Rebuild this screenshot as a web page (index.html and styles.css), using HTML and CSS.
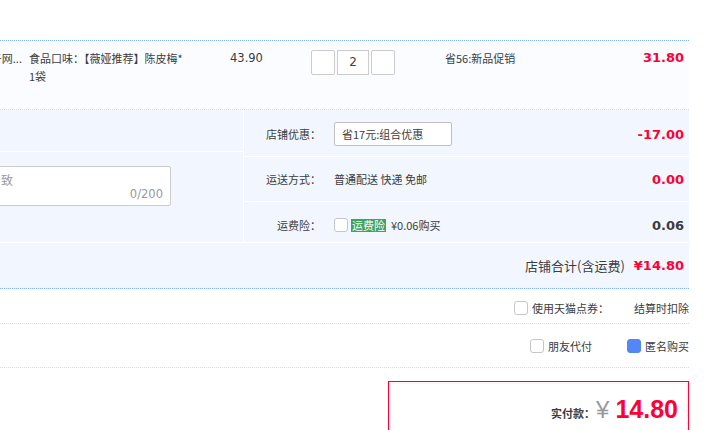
FILE: index.html
```html
<!DOCTYPE html>
<html lang="zh-CN">
<head>
<meta charset="utf-8">
<title>订单确认</title>
<link rel="stylesheet" href="styles.css">
</head>
<body>
<div class="page">
  <div class="top-space"></div>
  <div class="order">
    <div class="item">
      <div class="c-title"><span class="title-text">天猫超市官方旗舰店子网...</span></div>
      <div class="c-sku">食品口味：【薇娅推荐】陈皮梅*<br>1袋</div>
      <div class="c-price num">43.90</div>
      <div class="c-qty">
        <span class="qbtn"></span>
        <span class="qinput num">2</span>
        <span class="qbtn"></span>
      </div>
      <div class="c-promo">省56:新品促销</div>
      <div class="c-sum num red bold">31.80</div>
    </div>
    <div class="extra">
      <div class="extra-left">
        <div class="msg-top"></div>
        <div class="msg-body">
          <div class="memo">
            <span class="memo-ph">致</span>
            <span class="memo-count num">0/200</span>
          </div>
        </div>
      </div>
      <div class="extra-right">
        <div class="erow erow-1">
          <span class="elabel">店铺优惠：</span>
          <span class="select">省17元:组合优惠</span>
          <span class="eamount num red bold">-17.00</span>
        </div>
        <div class="erow erow-2">
          <span class="elabel">运送方式：</span>
          <span class="etext">普通配送 快递 免邮</span>
          <span class="eamount num red bold">0.00</span>
        </div>
        <div class="erow erow-3">
          <span class="elabel">运费险：</span>
          <span class="cbox"></span>
          <span class="tag">运费险</span>
          <span class="etext ins">¥0.06购买</span>
          <span class="eamount num dark bold">0.06</span>
        </div>
      </div>
    </div>
    <div class="total">
      <span class="total-label">店铺合计(含运费)</span>
      <span class="total-val num red bold">¥14.80</span>
    </div>
  </div>
  <div class="opt opt-1">
    <span class="cbox"></span>
    <span class="opt-label">使用天猫点券：</span>
    <span class="opt-note">结算时扣除</span>
  </div>
  <div class="opt opt-2">
    <span class="cbox"></span>
    <span class="opt-label">朋友代付</span>
    <span class="cbox checked"></span>
    <span class="opt-label">匿名购买</span>
  </div>
  <div class="pay-wrap">
    <div class="pay">
      <span class="pay-label">实付款：</span>
      <span class="pay-yen">¥</span>
      <span class="pay-val">14.80</span>
    </div>
  </div>
</div>
</body>
</html>
```
FILE: styles.css
```css
* { box-sizing: border-box; }
html, body { margin: 0; padding: 0; background: #fff; }
body {
  font-family: "Noto Sans CJK SC", "Liberation Sans", sans-serif;
  font-size: 11px;
  color: #3c3c3c;
  overflow: hidden;
}
.page { width: 689px; }
.top-space { height: 40px; }
.num { font-family: "DejaVu Sans", "Liberation Sans", sans-serif; }
.red { color: #ff0036; }
.dark { color: #3c3c3c; }
.bold { font-weight: bold; font-size: 13px; }

.item {
  display: flex;
  align-items: flex-start;
  height: 70px;
  padding-top: 8px;
  background: #fbfcff;
  border-top: 1px dotted #80b2ff;
  border-bottom: 1px dotted #dcdcdc;
  line-height: 18px;
}
.c-title { width: 29px; flex: none; }
.title-text {
  display: flex;
  justify-content: flex-end;
  width: 22px;
  overflow: hidden;
  white-space: nowrap;
}
.c-sku { width: 201px; flex: none; }
.c-price { width: 81px; flex: none; font-size: 11.5px; }
.c-qty { width: 134px; flex: none; display: flex; gap: 2px; margin-top: 1px; }
.qbtn, .qinput {
  display: block;
  height: 25px;
  border: 1px solid #cccccc;
  background: #fff;
}
.qbtn { width: 24px; border-radius: 2px; }
.qinput { width: 32px; text-align: center; line-height: 23px; font-size: 12px; }
.c-promo { flex: 1; }
.c-sum { padding-right: 5px; }

.extra {
  display: grid;
  grid-template-columns: 243px 1fr;
  column-gap: 1px;
  background: #fff;
  border-bottom: 1px solid #fff;
}
.extra-left, .extra-right {
  display: flex;
  flex-direction: column;
  gap: 1px;
}
.msg-top { height: 41px; background: #f2f7ff; }
.msg-body { height: 90px; background: #f2f7ff; padding-top: 14px; overflow: hidden; }
.memo {
  position: relative;
  margin-left: -2px;
  width: 173px;
  height: 40px;
  background: #fff;
  border: 1px solid #cccccc;
  border-radius: 2px;
  padding: 4px 0 0 2px;
  color: #999;
  line-height: 18px;
  font-size: 12px;
}
.memo-count {
  position: absolute;
  right: 7px;
  bottom: 2px;
  color: #999;
  font-size: 11.5px;
}
.erow {
  display: flex;
  align-items: center;
  background: #f2f7ff;
  padding-right: 5px;
}
.erow-1 { height: 46px; padding-top: 2px; }
.erow-2 { height: 44px; }
.erow-3 { height: 40px; padding-top: 6px; }
.elabel { width: 77px; text-align: right; margin-right: 13px; flex: none; }
.select {
  display: block;
  width: 118px;
  height: 24px;
  line-height: 22px;
  padding-left: 7px;
  background: #fff;
  border: 1px solid #bfbfbf;
  border-radius: 2px;
}
.eamount { margin-left: auto; }
.cbox {
  display: inline-block;
  width: 14px;
  height: 14px;
  border: 1px solid #c6c6c6;
  border-radius: 3px;
  background: #fff;
  flex: none;
}
.cbox.checked { background: #5586f8; border-color: #5586f8; }
.tag {
  margin-left: 3px;
  background: #3ea35d;
  color: #fff;
  height: 13px;
  line-height: 13px;
  padding: 0 1px;
}
.ins { margin-left: 5px; }

.total {
  display: flex;
  justify-content: flex-end;
  align-items: center;
  gap: 9px;
  height: 46px;
  padding-right: 5px;
  background: #f2f7ff;
  border-bottom: 1px dotted #80b2ff;
}
.total-label { font-size: 13px; }

.opt {
  display: flex;
  justify-content: flex-end;
  align-items: center;
  border-bottom: 1px dotted #dcdcdc;
}
.opt-1 { height: 35px; padding-top: 3px; }
.opt-2 { height: 44px; }
.opt-label { margin-left: 4px; }
.opt-1 .opt-label { margin-right: 25px; }
.opt-2 .opt-label:nth-child(2) { margin-right: 35px; }

.pay-wrap { padding-top: 13px; padding-left: 388px; }
.pay {
  display: flex;
  justify-content: flex-end;
  align-items: baseline;
  height: 90px;
  padding: 13px 10px 0 0;
  border: 1px solid #ff0036;
  box-shadow: inset 0 0 0 2px #fff3f3;
}
.pay-label { font-weight: bold; font-size: 11px; color: #3c3c3c; }
.pay-yen {
  font-family: "Liberation Sans", sans-serif;
  font-size: 24px;
  color: #999;
  margin-left: 1px;
}
.pay-val {
  font-family: "Liberation Sans", sans-serif;
  font-weight: bold;
  font-size: 25px;
  color: #ff0036;
  margin-left: 6px;
}
```
